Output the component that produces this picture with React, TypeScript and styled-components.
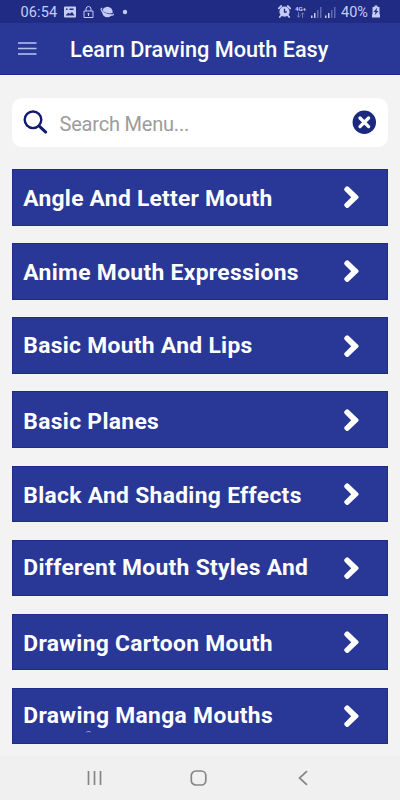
import React from "react";
import styled, { createGlobalStyle } from "styled-components";

const GlobalStyle = createGlobalStyle`
  * { box-sizing: border-box; }
  body { margin: 0; background: #f3f3f3; font-family: Roboto, sans-serif; }
`;

const Screen = styled.div`
  width: 400px;
  height: 800px;
  display: flex;
  flex-direction: column;
  overflow: hidden;
  background: #f3f3f3;
`;

const StatusBar = styled.div`
  height: 23px;
  flex: none;
  display: flex;
  justify-content: space-between;
  padding: 0 20px 0 20.5px;
  background: #202b84;
  color: #c5cbf5;
`;

const StatusGroup = styled.div`
  display: flex;
  align-items: center;
`;

const StatusText = styled.span<{ $width: number; $gap?: number; $spacing?: number }>`
  width: ${(p) => p.$width}px;
  margin-left: ${(p) => p.$gap ?? 0}px;
  font-size: 14.5px;
  line-height: 24px;
  letter-spacing: ${(p) => p.$spacing ?? 0}px;
  white-space: nowrap;
  padding-top: 2px;
`;

const StatusIcon = styled.svg<{ $gap?: number }>`
  display: block;
  flex: none;
  margin-left: ${(p) => p.$gap ?? 0}px;
`;

const NetworkBadge = styled.div`
  width: 12px;
  margin-left: 4px;
  display: flex;
  flex-direction: column;
  align-items: center;
  font-size: 6.2px;
  font-weight: 700;
  line-height: 6px;
`;

const AppBar = styled.header`
  height: 52px;
  flex: none;
  display: flex;
  align-items: center;
  padding: 0 0 0 18px;
  background: #293896;
  border-bottom: 1px solid #1d2b86;
`;

const MenuIcon = styled.svg`
  display: block;
  flex: none;
`;

const Title = styled.h1`
  margin: 3px 0 0 33px;
  color: #fff;
  font-size: 21.7px;
  line-height: 28px;
  font-weight: 500;
  white-space: nowrap;
`;

const Content = styled.main`
  flex: 1;
  min-height: 0;
  padding: 23px 12px 0;
`;

const SearchBox = styled.div`
  height: 49px;
  display: flex;
  align-items: center;
  padding: 0 11px;
  border-radius: 10px;
  background: #fff;
`;

const Placeholder = styled.span`
  flex: 1;
  margin-left: 11.5px;
  padding-top: 2px;
  color: #9c9c9c;
  font-size: 20px;
  line-height: 26px;
  letter-spacing: -0.2px;
`;

const List = styled.div`
  display: flex;
  flex-direction: column;
  gap: 17.7px;
  margin-top: 22.2px;
`;

const Row = styled.div`
  height: 56.4px;
  flex: none;
  display: flex;
  align-items: center;
  justify-content: space-between;
  padding: 0 28px 0 11.3px;
  background: #293896;
  box-shadow: inset 0 0 0 1px #202d88;
  color: #fff;
`;

const Label = styled.span<{ $drop: number; $spacing: number }>`
  position: relative;
  padding-top: ${(p) => p.$drop}px;
  font-size: 22.8px;
  line-height: 28px;
  font-weight: 700;
  letter-spacing: ${(p) => p.$spacing}px;
  white-space: nowrap;
`;

/* Sliver of the clipped second line, just below the label. */
const NextLine = styled.i`
  position: absolute;
  left: 63px;
  top: 30px;
  width: 5px;
  height: 2px;
  border-top: 1px solid #8f9ce0;
  border-radius: 2px 2px 0 0;
`;

const NavBar = styled.nav`
  height: 44px;
  flex: none;
  display: flex;
  align-items: center;
  padding-left: 86px;
  background: #f0f0f0;
`;

const NavIcon = styled.svg<{ $gap?: number }>`
  display: block;
  margin-left: ${(p) => p.$gap ?? 0}px;
`;

const items = [
  { text: "Angle And Letter Mouth", drop: 4, spacing: 0.26 },
  { text: "Anime Mouth Expressions", drop: 4, spacing: 0.34 },
  { text: "Basic Mouth And Lips", drop: 1, spacing: 0.32 },
  { text: "Basic Planes", drop: 4, spacing: 0.34 },
  { text: "Black And Shading Effects", drop: 4, spacing: 0.32 },
  { text: "Different Mouth Styles And", drop: 1, spacing: 0.3 },
  { text: "Drawing Cartoon Mouth", drop: 4, spacing: 0.32 },
  { text: "Drawing Manga Mouths", drop: 1, spacing: 0.34, wraps: true },
];

const Signal = ({ gap }: { gap: number }) => (
  <StatusIcon $gap={gap} width="11" height="12" viewBox="0 0 11 12" fill="currentColor">
    <path d="M0 9.500h1.500V12H0zM3 7h1.500v5H3z" />
    <path d="M6 4h1.500v8H6zM9 1h1.500v11H9z" opacity=".4" />
  </StatusIcon>
);

const Chevron = () => (
  <svg width="17" height="24" viewBox="0 0 17 24" fill="#fff">
    <path d="M1.700 5.700Q.4 4.400 1.700 3.100L2.900 1.800Q4.200.600 5.500 1.800L15.200 11Q16.300 12.200 15.200 13.300L5.500 22.500Q4.200 23.700 2.900 22.500L1.700 21.200Q.4 20 1.700 18.700L8.200 12.200Z" />
  </svg>
);

export default function App() {
  return (
    <Screen>
      <GlobalStyle />
      <StatusBar>
        <StatusGroup>
          <StatusText $width={43.5} $spacing={0.15}>06:54</StatusText>
          <StatusIcon width="12" height="12" viewBox="0 0 12 12">
            <path fill="currentColor" fillRule="evenodd" d="M1 .5h10a1 1 0 0 1 1 1v9a1 1 0 0 1-1 1H1a1 1 0 0 1-1-1v-9a1 1 0 0 1 1-1zM1.500 9.500h9L8 6 6 7.800 4.200 6.800zM2 2.500V4h1.500V2.500zM5.500 2.500V4h4V2.500z" />
          </StatusIcon>
          <StatusIcon $gap={7} width="11" height="12" viewBox="0 0 11 12" fill="none" stroke="currentColor">
            <path d="M1 5h9v6.500H1zM3 5V3a2.500 2.500 0 0 1 5 0v2M5.500 7v3M4.500 7.800h2" />
          </StatusIcon>
          <StatusIcon $gap={6} width="15" height="12" viewBox="0 0 15 12">
            <ellipse cx="7.400" cy="6" rx="5.300" ry="5.200" fill="currentColor" />
            <path d="M1.500 3.800C3 7 8 8.800 13 7.600" fill="none" stroke="#202b84" strokeWidth="1.100" />
            <path d="M2.200 2.200C-1 3 3 7.300 8 8.700c3.500.8 6 .7 5.300-1" fill="none" stroke="currentColor" strokeWidth="1.200" />
          </StatusIcon>
          <StatusIcon $gap={7} width="6" height="6" viewBox="0 0 6 6">
            <circle cx="3" cy="3" r="2.200" fill="currentColor" />
          </StatusIcon>
        </StatusGroup>
        <StatusGroup>
          <StatusIcon width="13" height="13" viewBox="0 0 13 13">
            <path d="M.8 3.300 3.300 1M9.700 1l2.500 2.300M3 10.500l-1.200 1.500M10 10.500l1.200 1.500" stroke="currentColor" strokeWidth="1.700" strokeLinecap="round" />
            <circle cx="6.500" cy="6.700" r="5.100" fill="currentColor" />
            <path d="M6.500 3.800v3.200h2.300" fill="none" stroke="#202b84" strokeWidth="1.300" />
          </StatusIcon>
          <NetworkBadge>
            4G+
            <svg width="9" height="6" viewBox="0 0 9 6" fill="none" stroke="currentColor" strokeWidth=".8" opacity=".6">
              <path d="M2.500 0v5M.8 3.500l1.700 1.700 1.700-1.700M6.500 6V1M4.800 2.500 6.500.8l1.700 1.700" />
            </svg>
          </NetworkBadge>
          <Signal gap={4} />
          <Signal gap={3} />
          <StatusText $width={31} $gap={5.5}>40%</StatusText>
          <StatusIcon width="8" height="13" viewBox="0 0 8 13">
            <path fill="currentColor" d="M2.500.5h3V2h2v7.500H8v3H0v-3h.5V2h2z" />
            <path fill="#202b84" d="M5.200 2.800 1.500 7h2L2.800 10 6.500 6h-2z" />
          </StatusIcon>
        </StatusGroup>
      </StatusBar>

      <AppBar>
        <MenuIcon width="19" height="14" viewBox="0 0 19 14" stroke="#b9c2f3" strokeWidth="1.700">
          <path d="M0 1h18.500M0 6.500h18.500M0 12h18.500" />
        </MenuIcon>
        <Title>Learn Drawing Mouth Easy</Title>
      </AppBar>

      <Content>
        <SearchBox>
          <svg width="25" height="25" viewBox="0 0 25 25" fill="none" stroke="#111b70" strokeLinecap="round">
            <circle cx="10" cy="9.800" r="8.300" strokeWidth="2.400" />
            <path d="m16.500 16.300 6.200 5.800" strokeWidth="3" />
          </svg>
          <Placeholder>Search Menu...</Placeholder>
          <svg width="25" height="25" viewBox="0 0 25 25">
            <circle cx="12.300" cy="12.200" r="11.700" fill="#1b2980" />
            <path d="m8 8 8.600 8.600M16.600 8 8 16.600" stroke="#fff" strokeWidth="3.300" strokeLinecap="round" />
          </svg>
        </SearchBox>
        <List>
          {items.map((item) => (
            <Row key={item.text}>
              <Label $drop={item.drop} $spacing={item.spacing}>
                {item.text}
                {item.wraps && <NextLine />}
              </Label>
              <Chevron />
            </Row>
          ))}
        </List>
      </Content>

      <NavBar>
        <NavIcon width="17" height="16" viewBox="0 0 17 16" stroke="#858585" strokeWidth="1.700">
          <path d="M2.500 1v14M8.500 1v14M14.500 1v14" />
        </NavIcon>
        <NavIcon $gap={86} width="18" height="16" viewBox="0 0 18 16" fill="none" stroke="#858585" strokeWidth="1.700">
          <rect x="2.300" y="1" width="14.500" height="14" rx="4.500" />
        </NavIcon>
        <NavIcon $gap={91} width="12" height="16" viewBox="0 0 12 16" fill="none" stroke="#858585" strokeWidth="1.700">
          <path d="m9 1.200-7.500 6.800L9 14.800" />
        </NavIcon>
      </NavBar>
    </Screen>
  );
}
